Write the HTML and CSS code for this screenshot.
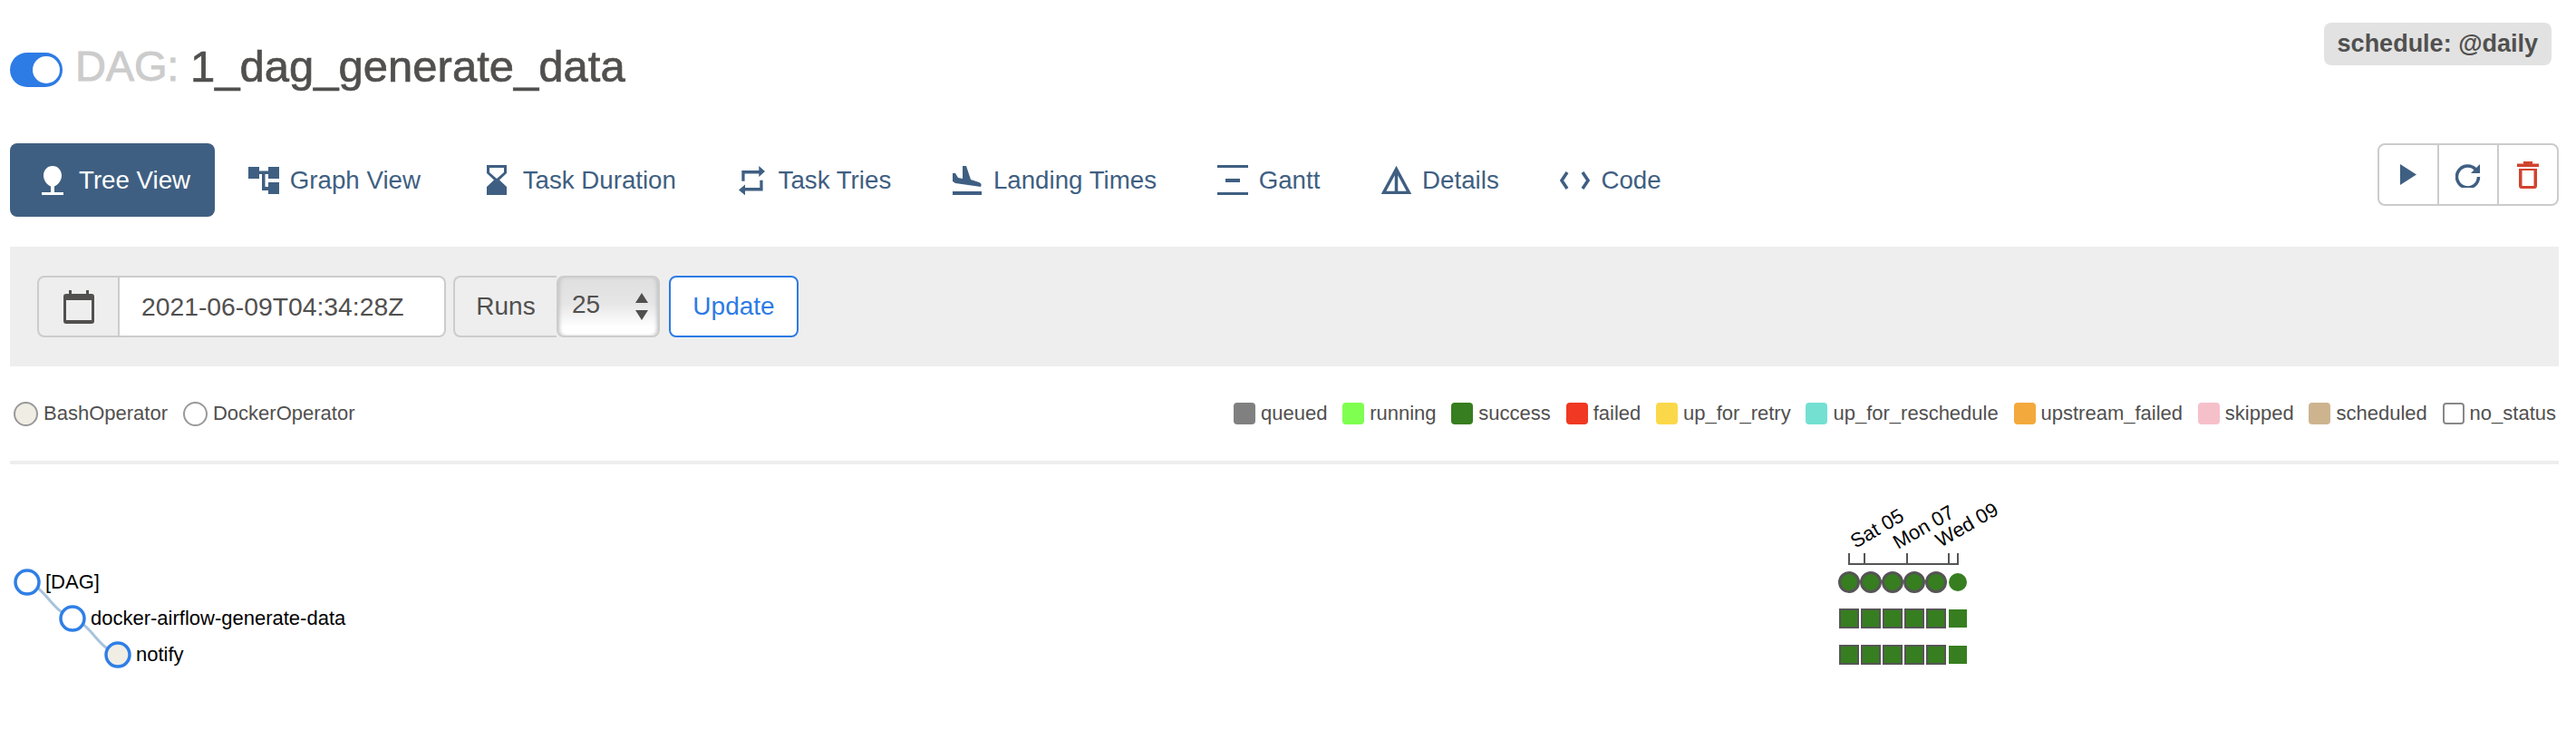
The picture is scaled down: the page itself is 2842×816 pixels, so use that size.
FILE: index.html
```html
<!DOCTYPE html>
<html lang="en">
<head>
  <meta charset="UTF-8">
  <title>1_dag_generate_data - Tree View</title>
  <link rel="stylesheet" href="styles.css">
</head>
<body>
  <div class="page">
    <header class="dag-header">
      <h4 class="dag-title">
        <span class="toggle"><span class="toggle-knob"></span></span>
        <span class="dag-label">DAG:</span>
        <span class="dag-name">1_dag_generate_data</span>
      </h4>
      <span class="schedule-badge">schedule: @daily</span>
    </header>

    <div class="nav-row">
      <nav class="tabs">
        <a class="tab active" href="#">
          <span class="tab-icon"><svg width="24" height="32" viewBox="0 0 24 32"><path d="M12 0C18 0 22 5 22 10.500C22 16 18 21 14 22.500V29H24V32H0V29H10V22.500C6 21 2 16 2 10.500C2 5 6 0 12 0Z"/></svg></span>
          Tree View
        </a>
        <a class="tab" href="#">
          <span class="tab-icon"><svg width="34" height="30" viewBox="0 0 34 30"><path d="M0 0H12V4.500H22V0H34V13H22V8H18.500V22H22V17H34V30H22V26H15V8H12V13H0Z"/></svg></span>
          Graph View
        </a>
        <a class="tab" href="#">
          <span class="tab-icon"><svg width="22" height="33" viewBox="0 0 22 33"><path fill-rule="evenodd" d="M0 0H22V9L14 16.500L22 24V33H0V24L8 16.500L0 9ZM3 3V8L11 15L19 8V3Z"/></svg></span>
          Task Duration
        </a>
        <a class="tab" href="#">
          <span class="tab-icon"><svg width="29" height="32" viewBox="0 0 29 32"><path d="M22.300 0L29 6L22.300 12V8.500H6.600V16.700H3.300V5H22.300ZM7 20.600V24H23.300V15.700H26.600V27.500H7V32.300L0 26.500Z"/></svg></span>
          Task Tries
        </a>
        <a class="tab" href="#">
          <span class="tab-icon"><svg width="32" height="32" viewBox="0 0 32 32"><path d="M0 8H3L6 13L11 14V0H15L20 15L29 18C32 19 32 21 31 23L3 19L0 17ZM0 28H32V32H0Z"/></svg></span>
          Landing Times
        </a>
        <a class="tab" href="#">
          <span class="tab-icon"><svg width="34" height="33" viewBox="0 0 34 33"><path d="M0 0H34V3H0ZM9 15H25V19H9ZM0 30H34V33H0Z"/></svg></span>
          Gantt
        </a>
        <a class="tab" href="#">
          <span class="tab-icon"><svg width="33" height="31" viewBox="0 0 33 31"><path class="icon-line" d="M16.500 3.500L2.500 29.500H30.500ZM16.500 6V29"/></svg></span>
          Details
        </a>
        <a class="tab" href="#">
          <span class="tab-icon"><svg width="33" height="20" viewBox="0 0 33 20"><path class="icon-line" d="M8 1L2 10L8 19M25 1L31 10L25 19"/></svg></span>
          Code
        </a>
      </nav>
      <div class="action-group">
        <button class="action-btn"><svg width="18" height="23" viewBox="0 0 18 23"><path d="M0 0L18 11.500L0 23Z"/></svg></button>
        <button class="action-btn"><svg width="28" height="28" viewBox="0 0 28 28"><path class="icon-line" d="M22.500 8A12 12 0 1 0 25.500 16"/><path d="M27 2V12H17Z"/></svg></button>
        <button class="action-btn danger"><svg width="24" height="30" viewBox="0 0 24 30"><path fill-rule="evenodd" d="M7 0H17V2.500H24V6H0V2.500H7ZM2 8H22V27Q22 30 19 30H5Q2 30 2 27ZM5.500 10V27H18.500V10Z"/></svg></button>
      </div>
    </div>

    <form class="filter-panel">
      <div class="input-group">
        <span class="addon addon-calendar"><svg width="34" height="37" viewBox="0 0 34 37"><path fill-rule="evenodd" d="M6 0H9V4H25V0H28V4H31Q34 4 34 7V34Q34 37 31 37H3Q0 37 0 34V7Q0 4 3 4H6ZM3 11V33H31V11Z"/></svg></span>
        <input class="date-input" type="text" value="2021-06-09T04:34:28Z">
      </div>
      <div class="input-group">
        <span class="addon addon-runs">Runs</span>
        <div class="select-wrap">
          <select class="runs-select"><option>25</option></select>
          <svg class="select-arrows" width="14" height="30" viewBox="0 0 14 30"><path d="M7 0L14 11H0ZM0 19H14L7 30Z"/></svg>
        </div>
      </div>
      <button class="update-btn" type="button">Update</button>
    </form>

    <div class="legend-row">
      <div class="operators">
        <span class="legend-item"><span class="op-dot bash"></span>BashOperator</span>
        <span class="legend-item"><span class="op-dot"></span>DockerOperator</span>
      </div>
      <div class="states">
        <span class="legend-item"><span class="state-box queued"></span>queued</span>
        <span class="legend-item"><span class="state-box running"></span>running</span>
        <span class="legend-item"><span class="state-box success"></span>success</span>
        <span class="legend-item"><span class="state-box failed"></span>failed</span>
        <span class="legend-item"><span class="state-box retry"></span>up_for_retry</span>
        <span class="legend-item"><span class="state-box reschedule"></span>up_for_reschedule</span>
        <span class="legend-item"><span class="state-box upstream"></span>upstream_failed</span>
        <span class="legend-item"><span class="state-box skipped"></span>skipped</span>
        <span class="legend-item"><span class="state-box scheduled"></span>scheduled</span>
        <span class="legend-item"><span class="state-box no-status"></span>no_status</span>
      </div>
    </div>

    <hr class="divider">
  </div>

  <svg class="tree-chart" width="2842" height="304" viewBox="0 512 2842 304">
    <path class="tree-link" d="M30 642C52 650 56 672 80 682"/>
    <path class="tree-link" d="M80 682C102 690 106 712 130 722"/>
    <circle class="tree-node" cx="30" cy="642" r="13"/>
    <circle class="tree-node" cx="80" cy="682" r="13"/>
    <circle class="tree-node bash" cx="130" cy="722" r="13"/>
    <text class="tree-label" x="50" y="649">[DAG]</text>
    <text class="tree-label" x="100" y="689">docker-airflow-generate-data</text>
    <text class="tree-label" x="150" y="729">notify</text>

    <path class="axis" d="M2040 610V622H2160V610M2057 610V622M2104 610V622M2150 610V622"/>
    <text class="tick" transform="translate(2047 605) rotate(-30)">Sat 05</text>
    <text class="tick" transform="translate(2094 606) rotate(-30)">Mon 07</text>
    <text class="tick" transform="translate(2141 604) rotate(-30)">Wed 09</text>

    <circle class="run" cx="2040" cy="642" r="10.500"/>
    <circle class="run" cx="2064" cy="642" r="10.500"/>
    <circle class="run" cx="2088" cy="642" r="10.500"/>
    <circle class="run" cx="2112" cy="642" r="10.500"/>
    <circle class="run" cx="2136" cy="642" r="10.500"/>
    <circle class="run last" cx="2160" cy="642" r="10"/>

    <rect class="run" x="2030" y="672" width="20" height="20"/>
    <rect class="run" x="2054" y="672" width="20" height="20"/>
    <rect class="run" x="2078" y="672" width="20" height="20"/>
    <rect class="run" x="2102" y="672" width="20" height="20"/>
    <rect class="run" x="2126" y="672" width="20" height="20"/>
    <rect class="run last" x="2150" y="672" width="20" height="20"/>

    <rect class="run" x="2030" y="712" width="20" height="20"/>
    <rect class="run" x="2054" y="712" width="20" height="20"/>
    <rect class="run" x="2078" y="712" width="20" height="20"/>
    <rect class="run" x="2102" y="712" width="20" height="20"/>
    <rect class="run" x="2126" y="712" width="20" height="20"/>
    <rect class="run last" x="2150" y="712" width="20" height="20"/>
  </svg>
</body>
</html>
```

FILE: styles.css
```css
body {
  margin: 0;
  font-family: "Liberation Sans", Arial, sans-serif;
  color: #51504f;
  background: #fff;
  overflow: hidden;
}
.page {
  padding: 0 19px 0 11px;
}
.dag-header {
  display: flex;
  justify-content: space-between;
  align-items: flex-start;
  height: 158px;
  padding: 25px 8px 0 0;
  box-sizing: border-box;
}
.dag-title {
  display: flex;
  align-items: center;
  margin: 29px 0 0 0;
  font-size: 49px;
  font-weight: normal;
  line-height: 38px;
}
.toggle {
  display: flex;
  justify-content: flex-end;
  align-items: center;
  width: 58px;
  height: 38px;
  padding: 0 3px;
  box-sizing: border-box;
  background: #2d7be5;
  border-radius: 19px;
}
.toggle-knob {
  width: 30px;
  height: 30px;
  background: #fff;
  border-radius: 50%;
}
.dag-label {
  margin: 0 0 8px 14px;
  color: #ccc;
  font-size: 47px;
  letter-spacing: -0.2px;
  -webkit-text-stroke: 0.9px #ccc;
}
.dag-name {
  margin: 0 0 8px 13px;
  -webkit-text-stroke: 0.7px #51504f;
}
.schedule-badge {
  height: 47px;
  padding: 0 15px;
  line-height: 47px;
  font-size: 27px;
  font-weight: bold;
  background: #e2e2e2;
  border-radius: 8px;
}
.nav-row {
  display: flex;
  justify-content: space-between;
  align-items: flex-start;
  margin-bottom: 33px;
}
.tabs {
  display: flex;
  gap: 5.7px;
}
.tab {
  display: flex;
  align-items: center;
  height: 81px;
  padding: 0 30px 0 31px;
  font-size: 27.7px;
  color: #3f5f82;
  text-decoration: none;
  border-radius: 8px;
}
.tab svg {
  display: block;
  fill: currentColor;
}
.tab.active {
  padding: 0 27px 0 30px;
  color: #fff;
  background: #3f5f82;
}
.tab-icon {
  display: flex;
  justify-content: center;
  width: 34px;
  margin-right: 12px;
}
.icon-line {
  fill: none !important;
  stroke: currentColor;
  stroke-width: 3.5;
}
.action-group {
  display: flex;
  width: 200px;
  height: 69px;
  border: 2px solid #ccc;
  border-radius: 8px;
  box-sizing: border-box;
}
.action-btn {
  display: flex;
  flex: 1;
  align-items: center;
  justify-content: center;
  padding: 0;
  color: #3f5f82;
  background: none;
  border: none;
  border-right: 2px solid #ccc;
}
.action-btn:last-child {
  border-right: none;
}
.action-btn svg {
  fill: currentColor;
}
.action-btn.danger {
  color: #d1432f;
}
.filter-panel {
  display: flex;
  gap: 8px;
  margin: 0;
  padding: 32px 30px;
  background: #eee;
}
.input-group {
  display: flex;
  height: 68px;
}
.addon {
  display: flex;
  align-items: center;
  justify-content: center;
  box-sizing: border-box;
  border: 2px solid #ccc;
  border-radius: 8px 0 0 8px;
  background: #eee;
  font-size: 28px;
}
.addon-calendar {
  width: 91px;
  border-right-width: 2px;
}
.addon-calendar svg {
  fill: #51504f;
}
.addon-runs {
  width: 114px;
  border-right: none;
}
.date-input {
  width: 360px;
  padding: 0 0 0 24px;
  box-sizing: border-box;
  font: 28.3px "Liberation Sans", Arial, sans-serif;
  color: #51504f;
  background: #fff;
  border: 2px solid #ccc;
  border-left: none;
  border-radius: 0 8px 8px 0;
  outline: none;
}
.select-wrap {
  position: relative;
  width: 114px;
}
.runs-select {
  appearance: none;
  -webkit-appearance: none;
  width: 100%;
  height: 100%;
  padding: 0 0 6px 15px;
  font: 28px "Liberation Sans", Arial, sans-serif;
  color: #51504f;
  background: linear-gradient(#dfdfdf, #e6e6e6 45%, #fff 85%);
  border: 2px solid #ccc;
  border-radius: 8px;
  box-shadow: inset 3px 0 4px -2px #bbb, inset -3px 0 4px -2px #bbb;
}
.select-arrows {
  position: absolute;
  top: 19px;
  right: 13px;
  fill: #51504f;
}
.update-btn {
  width: 143px;
  height: 68px;
  margin-left: 2px;
  padding: 0;
  font: 28px "Liberation Sans", Arial, sans-serif;
  color: #2d7be5;
  background: #fff;
  border: 2px solid #2d7be5;
  border-radius: 8px;
}
.legend-row {
  display: flex;
  justify-content: space-between;
  align-items: center;
  height: 28px;
  margin-top: 38px;
  padding: 0 3px 0 4px;
  font-size: 22px;
}
.operators {
  display: flex;
  gap: 17px;
}
.states {
  display: flex;
  gap: 16.8px;
}
.legend-item {
  display: flex;
  align-items: center;
  gap: 6px;
  white-space: nowrap;
}
.op-dot {
  width: 27px;
  height: 27px;
  box-sizing: border-box;
  border: 2px solid #999;
  border-radius: 50%;
  background: #fff;
}
.op-dot.bash {
  background: #f0ede4;
}
.state-box {
  width: 24px;
  height: 24px;
  box-sizing: border-box;
  border-radius: 4px;
}
.queued { background: #808080; }
.running { background: #7fff4f; }
.success { background: #367e1f; }
.failed { background: #f03822; }
.retry { background: #fbd84a; }
.reschedule { background: #74e0d2; }
.upstream { background: #f4a93c; }
.skipped { background: #f6c0cb; }
.scheduled { background: #cdb48f; }
.no-status {
  background: #fff;
  border: 2px solid #888;
}
.divider {
  height: 4px;
  margin: 38px 0 0 0;
  background: #eee;
  border: none;
}
.tree-chart {
  display: block;
}
.tree-link {
  fill: none;
  stroke: #a8c4dc;
  stroke-width: 3;
}
.tree-node {
  fill: #fff;
  stroke: #2f7fe6;
  stroke-width: 3.5;
}
.tree-node.bash {
  fill: #f0ede4;
}
.tree-label {
  font-size: 22px;
  fill: #000;
}
.axis {
  fill: none;
  stroke: #555;
  stroke-width: 2;
}
.tick {
  font-size: 22px;
  fill: #000;
}
.run {
  fill: #367e1f;
  stroke: #555;
  stroke-width: 3;
}
.run.last {
  stroke: none;
}
rect.run {
  stroke-width: 2;
}
```
